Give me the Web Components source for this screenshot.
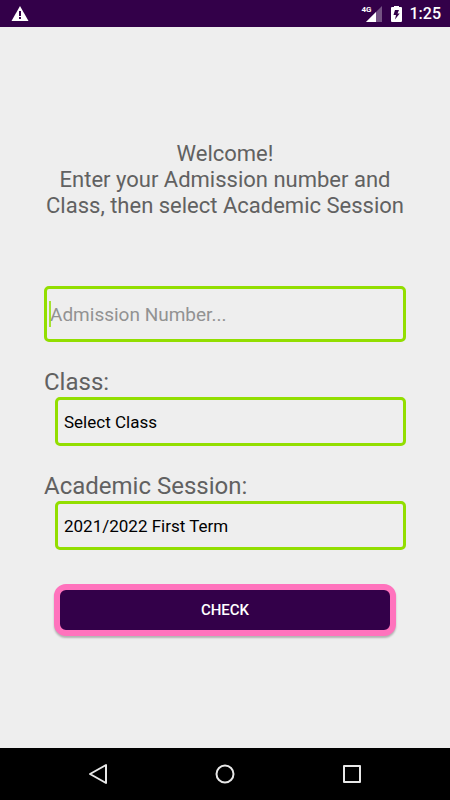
<!DOCTYPE html>
<html lang="en">
<head>
<meta charset="utf-8">
<meta name="viewport" content="width=device-width, initial-scale=1">
<title>Result Checker</title>
<style>
  body {
    margin: 0;
    background: #eeeeee;
    font-family: Roboto, "Liberation Sans", sans-serif;
    --plum: #330049;
    --lime: #92de00;
    --pink: #ff73bd;
    --muted: #616161;
  }
</style>
</head>
<body>
<app-screen>
  <status-bar slot="top" time="1:25"></status-bar>
  <welcome-message>Welcome!<br>Enter your Admission number and Class, then select Academic Session</welcome-message>
  <check-form>
    <text-field placeholder="Admission Number..."></text-field>
    <select-field label="Class:" value="Select Class"></select-field>
    <select-field label="Academic Session:" value="2021/2022 First Term"></select-field>
    <action-button>CHECK</action-button>
  </check-form>
  <nav-bar slot="bottom"></nav-bar>
</app-screen>
<script>
  class BaseElement extends HTMLElement {
    render(html) {
      const t = document.createElement('template');
      t.innerHTML = html;
      this.attachShadow({ mode: 'open' }).append(t.content.cloneNode(true));
    }
  }

  customElements.define('app-screen', class extends BaseElement {
    connectedCallback() {
      this.render(`
        <style>
          :host { display: flex; flex-direction: column; min-height: 100vh; }
          main { flex: 1; padding: 114px 44px 40px; }
        </style>
        <slot name="top"></slot>
        <main><slot></slot></main>
        <slot name="bottom"></slot>`);
    }
  });

  customElements.define('status-bar', class extends BaseElement {
    connectedCallback() {
      this.render(`
        <style>
          :host { display: block; background: var(--plum); color: #fff; }
          header { display: flex; align-items: center; justify-content: space-between;
                   height: 27px; padding: 0 9px 0 11px; box-sizing: border-box; }
          .right { display: flex; align-items: center; }
          svg { display: block; }
          .signal { display: flex; align-items: flex-start; }
          .net { font-size: 8px; line-height: 8px; font-weight: 700; margin-right: -6px; }
          .battery { margin: 0 8px 0 9px; }
          time { font-size: 16px; line-height: 27px; font-weight: 500; }
        </style>
        <header>
          <svg width="18" height="17" viewBox="0 0 18 17" role="img" aria-label="Warning">
            <path d="M9 1 17.5 16H.5Z" fill="#fff"/>
            <path d="M8 6h2v5H8zM8 12h2v2H8z" fill="#330049"/>
          </svg>
          <div class="right">
            <div class="signal">
              <span class="net">4G</span>
              <svg width="16" height="16" viewBox="0 0 16 16" role="img" aria-label="Signal">
                <path d="M16 0V16H0Z" fill="#fff" opacity=".32"/>
                <path d="M10 6V16H0Z" fill="#fff"/>
              </svg>
            </div>
            <svg class="battery" width="11" height="16" viewBox="0 0 11 16" role="img" aria-label="Charging">
              <path d="M3 0h5v1h2q1 0 1 1v13q0 1-1 1H1q-1 0-1-1V2q0-1 1-1h2z" fill="#fff"/>
              <path d="M8 4H4L2.500 9H5L4 13.500 8.700 7.500H6.500Z" fill="#330049"/>
            </svg>
            <time>${this.getAttribute('time')}</time>
          </div>
        </header>`);
    }
  });

  customElements.define('welcome-message', class extends BaseElement {
    connectedCallback() {
      this.render(`
        <style>
          :host { display: block; color: var(--muted); margin-bottom: 67px; }
          p { margin: 0; text-align: center; font-size: 22px; line-height: 26px; }
        </style>
        <p><slot></slot></p>`);
    }
  });

  customElements.define('check-form', class extends BaseElement {
    connectedCallback() {
      this.render(`
        <style>
          :host { display: block; }
          form { display: flex; flex-direction: column; gap: 26px; }
        </style>
        <form><slot></slot></form>`);
    }
  });

  customElements.define('text-field', class extends BaseElement {
    connectedCallback() {
      const text = this.getAttribute('placeholder');
      this.render(`
        <style>
          :host { display: block; position: relative; }
          input { display: block; box-sizing: border-box; width: 100%; height: 56px; margin: 0;
                  padding: 0 3px; border: 3px solid var(--lime); border-radius: 5px;
                  background: transparent; font: 19px/24px Roboto, "Liberation Sans", sans-serif;
                  color: #000; outline: none; }
          input::placeholder { color: #929292; opacity: 1; }
          .caret { position: absolute; left: 5px; top: 15px; width: 2px; height: 26px;
                   background: var(--lime); opacity: .8; }
        </style>
        <input type="text" aria-label="Admission Number" placeholder="${text}">
        <span class="caret"></span>`);
    }
  });

  customElements.define('select-field', class extends BaseElement {
    connectedCallback() {
      this.render(`
        <style>
          :host { display: block; }
          label { display: block; color: var(--muted); font-size: 24px; line-height: 29px; }
          .box { margin-left: 11px; }
          select { display: block; appearance: none; box-sizing: border-box; width: 100%;
                   height: 49px; margin: 0; padding: 0 6px; border: 3px solid var(--lime);
                   border-radius: 5px; background: transparent; color: #000;
                   font: 17px/24px Roboto, "Liberation Sans", sans-serif; }
        </style>
        <label for="choice">${this.getAttribute('label')}</label>
        <div class="box"><select id="choice"><option>${this.getAttribute('value')}</option></select></div>`);
    }
  });

  customElements.define('action-button', class extends BaseElement {
    connectedCallback() {
      this.render(`
        <style>
          :host { display: block; margin: 8px 10px 0; }
          button { display: block; box-sizing: border-box; width: 100%; height: 52px;
                   border: 6px solid var(--pink); border-radius: 12px; background: var(--plum);
                   color: #fff; font: 500 15px/20px Roboto, "Liberation Sans", sans-serif;
                   box-shadow: 0 2px 2px rgba(0,0,0,.25); }
        </style>
        <button type="button"><slot></slot></button>`);
    }
  });

  customElements.define('nav-bar', class extends BaseElement {
    connectedCallback() {
      this.render(`
        <style>
          :host { display: block; background: #000; }
          nav { display: grid; grid-template-columns: repeat(3, 1fr); height: 52px;
                padding: 0 35px; align-items: center; justify-items: center; }
          button { display: block; padding: 8px; border: 0; background: none; }
          svg { display: block; fill: none; stroke: #e8e8e8; stroke-width: 2; stroke-linejoin: round; }
        </style>
        <nav>
          <button type="button" aria-label="Back"><svg width="20" height="22" viewBox="0 0 20 22"><path d="M18 2V20L2 11Z"/></svg></button>
          <button type="button" aria-label="Home"><svg width="20" height="20" viewBox="0 0 20 20"><circle cx="10" cy="10" r="8.500"/></svg></button>
          <button type="button" aria-label="Recent apps"><svg width="20" height="20" viewBox="0 0 20 20"><path d="M2 2H18V18H2Z"/></svg></button>
        </nav>`);
    }
  });
</script>
</body>
</html>
